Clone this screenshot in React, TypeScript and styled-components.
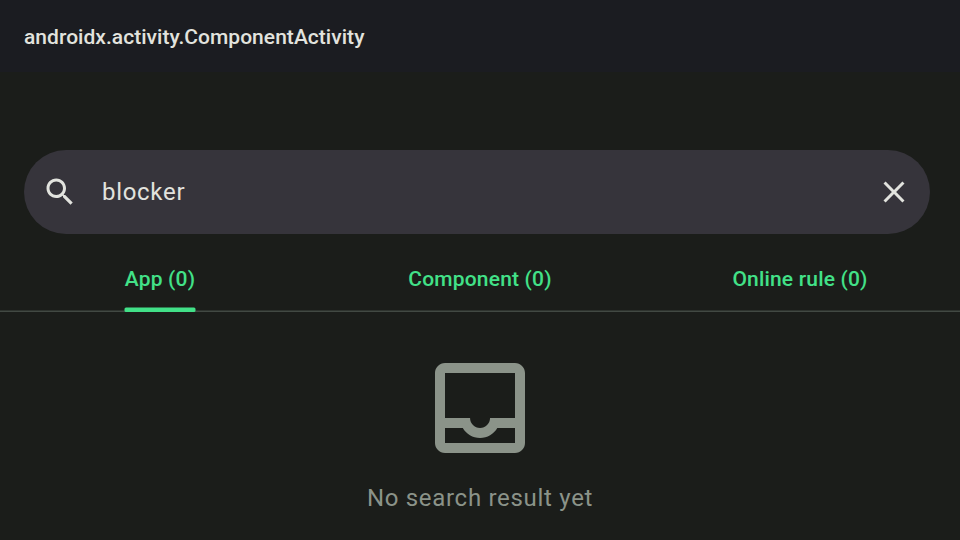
import React from "react";
import styled, { createGlobalStyle } from "styled-components";

const GlobalStyle = createGlobalStyle`
  body { margin: 0; background: #1b1d1a; font-family: Roboto, sans-serif; }
`;
const Screen = styled.main`
  width: 960px; height: 540px; overflow: hidden; background: #1b1d1a;
  display: flex; flex-direction: column;
`;
const TitleBar = styled.header`
  height: 72px; box-sizing: border-box; padding: 2px 24px 0; background: #1b1c21;
  display: flex; align-items: center; flex: none;
`;
const Title = styled.h1`
  margin: 0; color: #e2e3de; font-size: 21px; font-weight: 500; line-height: 30px;
  letter-spacing: 0.035px; white-space: nowrap;
`;
const SearchBar = styled.div`
  margin: 78px 30px 0 24px; height: 84px; border-radius: 42px; background: #36343b;
  box-sizing: border-box; padding: 0 18px; display: flex; align-items: center; flex: none;
`;
const Query = styled.span`
  flex: 1; margin-left: 24px; color: #e2e3de; font-size: 24px; line-height: 36px;
  letter-spacing: 0.7px;
`;
const Tabs = styled.nav`
  display: grid; grid-template-columns: repeat(3, 1fr); height: 78px; flex: none;
  background: linear-gradient(#2e332e 50%, #424943 50%) bottom / 100% 2px no-repeat;
`;
const Tab = styled.div`
  display: flex; justify-content: center;
`;
const TabLabel = styled.span`
  display: flex; flex-direction: column; justify-content: space-between;
  box-sizing: border-box; height: 78px; padding-top: 30px; color: #42e188;
  font-size: 21px; font-weight: 500; line-height: 30px; letter-spacing: 0.18px; white-space: nowrap;
`;
const Indicator = styled.svg`
  display: block; width: 72px; height: 5px; margin: 0 -1px; align-self: center; flex: none;
`;
const Empty = styled.section`
  display: flex; flex-direction: column; align-items: center; padding-top: 36px;
`;
const Message = styled.p`
  margin: 12px 0 0; color: #8b9389; font-size: 24px; line-height: 36px; letter-spacing: 0.7px;
`;

const Icon = ({ size, color, d }: { size: number; color: string; d: string }) => (
  <svg width={size} height={size} viewBox="0 0 24 24" fill={color}><path d={d} /></svg>
);
const SEARCH = "M15.5 14h-.79l-.28-.27C15.41 12.59 16 11.11 16 9.5 16 5.91 13.09 3 9.5 3S3 5.91 3 9.5 5.91 16 9.5 16c1.61 0 3.09-.59 4.23-1.57l.27.28v.79l5 4.99L20.49 19l-4.99-5zm-6 0C7.01 14 5 11.99 5 9.5S7.01 5 9.5 5 14 7.01 14 9.5 11.99 14 9.5 14z";
const CLOSE = "M19 6.41L17.59 5 12 10.59 6.41 5 5 6.41 10.59 12 5 17.59 6.41 19 12 13.41 17.59 19 19 17.59 13.41 12z";
const INBOX = "M19 3H5c-1.1 0-2 .9-2 2v14c0 1.1.9 2 2 2h14c1.1 0 2-.9 2-2V5c0-1.1-.9-2-2-2zm0 16H5v-3h3.56c.69 1.19 1.97 2 3.45 2s2.75-.81 3.45-2H19v3zm0-5h-4.99c0 1.1-.9 2-2 2s-2-.9-2-2H5V5h14v9z";

export default function App() {
  return (
    <Screen>
      <GlobalStyle />
      <TitleBar><Title>androidx.activity.ComponentActivity</Title></TitleBar>
      <SearchBar>
        <Icon size={36} color="#e2e3de" d={SEARCH} />
        <Query>blocker</Query>
        <Icon size={36} color="#e2e3de" d={CLOSE} />
      </SearchBar>
      <Tabs>
        <Tab>
          <TabLabel>
            App (0)
            <Indicator viewBox="0 0 72 5">
              <rect x="0.5" y="0.5" width="71" height="4.5" rx="1.5" fill="#42e188" />
            </Indicator>
          </TabLabel>
        </Tab>
        <Tab><TabLabel>Component (0)</TabLabel></Tab>
        <Tab><TabLabel>Online rule (0)</TabLabel></Tab>
      </Tabs>
      <Empty>
        <Icon size={120} color="#8b9389" d={INBOX} />
        <Message>No search result yet</Message>
      </Empty>
    </Screen>
  );
}
